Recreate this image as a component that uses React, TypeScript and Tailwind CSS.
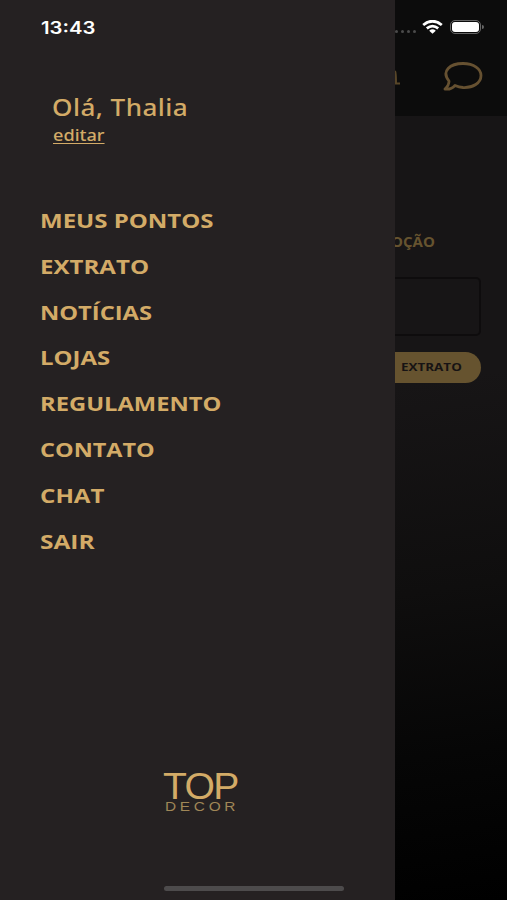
import { useLayoutEffect, useRef, useState } from "react";

type FitProps = { text: string; width: number; className?: string };

/* Stretches a line of text horizontally so that it fills the given width. */
function FitText({ text, width, className = "" }: FitProps) {
  const ref = useRef<HTMLSpanElement>(null);
  const [scale, setScale] = useState(1);
  useLayoutEffect(() => {
    if (ref.current) setScale(width / ref.current.offsetWidth);
  }, [text, width]);
  return (
    <span
      ref={ref}
      className={`inline-block origin-left whitespace-nowrap ${className}`}
      style={{ transform: `scaleX(${scale})` }}
    >
      {text}
    </span>
  );
}

const items = [
  { label: "MEUS PONTOS", width: 174 },
  { label: "EXTRATO", width: 109.5 },
  { label: "NOTÍCIAS", width: 112.5 },
  { label: "LOJAS", width: 70.5 },
  { label: "REGULAMENTO", width: 181.5 },
  { label: "CONTATO", width: 115 },
  { label: "CHAT", width: 64 },
  { label: "SAIR", width: 55 },
];

function Drawer() {
  return (
    <aside className="flex h-full w-[395px] shrink-0 flex-col bg-[#252122] text-[#d3ab67]">
      <div className="mt-[18px] ml-[41px] h-5 font-['Inter'] text-[17px] leading-5 font-semibold text-white">
        <FitText text="13:43" width={55} />
      </div>
      <div className="mt-[53px] ml-[52px] h-8 font-['Noto_Sans'] text-[24px] leading-8 font-medium">
        <FitText text="Olá, Thalia" width={136} className="tracking-[0.4px]" />
      </div>
      <a className="ml-[53px] h-6 font-['Noto_Sans'] text-[16px] leading-6 font-medium">
        <FitText text="editar" width={51} className="underline decoration-1 underline-offset-2" />
      </a>
      <nav className="mt-[51px] ml-[39.5px] flex flex-col text-[20px] font-bold">
        {items.map((item) => (
          <a key={item.label} className="h-[45.8px] leading-[45.8px]">
            <FitText text={item.label} width={item.width} />
          </a>
        ))}
      </nav>
      <div className="mt-auto flex h-[45px] flex-col pl-[163px] font-['Liberation_Sans']">
        <div className="h-[29px] text-[36px] leading-[29px]">
          <FitText text="TOP" width={75} className="tracking-[-1.5px]" />
        </div>
        <div className="h-3 pl-[2px] text-[12.5px] leading-3 text-[#a08757]">
          <FitText text="DECOR" width={74} className="tracking-[3px]" />
        </div>
      </div>
      <div className="mt-[69px] mb-[9px] ml-[164px] h-[5px] w-[180px] rounded-full bg-[#4d4b4c]" />
    </aside>
  );
}

function StatusIcons() {
  return (
    <div className="flex h-[54px] items-center">
      <div className="mt-2 flex w-[27px] gap-[3px]">
        {[0, 1, 2, 3].map((n) => (
          <i key={n} className="size-[3px] rounded-full bg-[#4b4b4b]" />
        ))}
      </div>
      <svg className="h-[14px] w-[21px]" viewBox="0 0 21 14" fill="none" stroke="white" strokeWidth="2.8">
        <path d="M1.2 5Q10.5-2.6 19.8 5M4.8 8.4Q10.5 3.8 16.2 8.4" />
        <path d="M7.2 10.7Q10.5 8 13.8 10.7L10.5 13.7Z" fill="white" stroke="none" />
      </svg>
      <div className="ml-[7px] h-[14px] w-[31px] rounded-[5px] border border-[#666] p-[1px]">
        <div className="h-full rounded-[3px] bg-white" />
      </div>
      <i className="ml-px h-1 w-[2px] rounded-r-full bg-[#666]" />
    </div>
  );
}

function Backdrop() {
  return (
    <main className="flex h-full min-w-0 flex-1 flex-col overflow-hidden bg-[linear-gradient(172deg,#171516_42%,#0f0e0e_65%,#060606_83%,#000_100%)] text-[#66532f]">
      <header className="h-[116px] bg-[#0c0c0c]">
        <StatusIcons />
        <div className="flex h-[44px] items-center">
          <svg className="h-[20px] w-[6px]" viewBox="0 0 6 20" fill="none" stroke="#584628" strokeWidth="2">
            <path d="M0 5Q1 7 1 17.5H5" />
          </svg>
          <svg className="ml-[42px] h-[30px] w-[40px]" viewBox="0 0 40 30" fill="none" stroke="#665131" strokeWidth="2.8" strokeLinejoin="round">
            <path d="M6 20C-2 10 7 2.5 20 2.5C31 2.5 38 8 38 14.5C38 22 30 27 20 26.5Q16 26.2 12 24.5Q8 29 2 28Q6 24.5 6 20Z" />
          </svg>
        </div>
      </header>
      <h2 className="mt-[115px] ml-[-4px] h-[22px] text-[14px] leading-[22px] font-bold">
        <FitText text="OÇÃO" width={44} />
      </h2>
      <div className="mt-[24px] h-[59px] w-[86px] rounded-r-[5px] border-2 border-l-0 border-[#0e0c0d]" />
      <button className="mt-[16px] flex h-[31px] w-[86px] items-center rounded-r-full bg-[#66532f] pl-[6px] text-[11px] font-bold text-[#171314]">
        <FitText text="EXTRATO" width={61} />
      </button>
    </main>
  );
}

export default function App() {
  return (
    <div className="flex h-[900px] w-[507px] overflow-hidden bg-black font-['Open_Sans',sans-serif]">
      <Drawer />
      <Backdrop />
    </div>
  );
}
